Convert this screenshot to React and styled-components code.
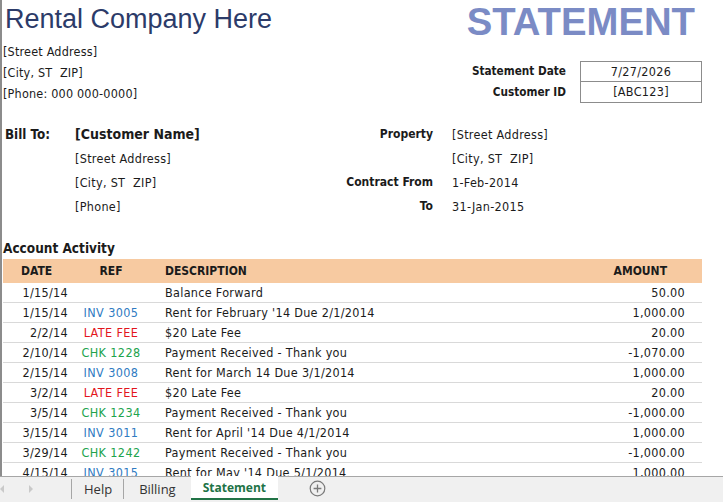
import React from "react";
import styled, { createGlobalStyle } from "styled-components";

const Global = createGlobalStyle`
  html, body { margin: 0; padding: 0; background: #fff; }
  body {
    font-family: "DejaVu Sans Condensed", "Liberation Sans", sans-serif;
    color: #1b1b1b;
  }
`;

const Window = styled.div`
  width: 723px;
  height: 502px;
  display: flex;
  flex-direction: column;
  overflow: hidden;
`;

const Sheet = styled.div`
  flex: 1;
  min-height: 0;
  overflow: hidden;
  position: relative;
  border-left: 2px solid #8c8c8c;
  padding: 0 21px 0 1px;
  &::before {
    content: "";
    position: absolute;
    left: -2px;
    top: 0;
    width: 2px;
    height: 37px;
    background: #1e6b3f;
  }
`;

const TitleRow = styled.div`
  height: 41px;
  display: flex;
  align-items: center;
  justify-content: space-between;
  padding: 0 7px 2px 2px;
  box-sizing: border-box;
`;

const CompanyName = styled.div`
  font-family: "Liberation Sans", Arial, sans-serif;
  font-size: 27px;
  line-height: 1;
  color: #2c3b69;
`;

const DocTitle = styled.div`
  align-self: flex-start;
  font-family: "Liberation Sans", Arial, sans-serif;
  font-weight: bold;
  font-size: 38.3px;
  line-height: 1.15;
  margin-top: 0;
  color: #7b8bc5;
`;

const InfoRow = styled.div`
  display: flex;
  justify-content: space-between;
  align-items: flex-start;
`;

const AddressBlock = styled.div`
  display: flex;
  flex-direction: column;
`;

const Line = styled.div`
  height: 21px;
  line-height: 21px;
  font-size: 12.5px;
  letter-spacing: 0.2px;
  white-space: nowrap;
`;

const MetaGrid = styled.div`
  margin-top: 20px;
  display: grid;
  grid-template-columns: auto 122px;
  grid-auto-rows: 21px;
  column-gap: 14px;
`;

const MetaLabel = styled.div`
  font-size: 11.7px;
  font-weight: bold;
  text-align: right;
  line-height: 21px;
`;

const MetaValue = styled.div`
  box-sizing: border-box;
  border: 1px solid #8c8c8c;
  border-top-width: ${(p) => (p.$first ? 1 : 0)}px;
  font-size: 12.5px;
  letter-spacing: 0.3px;
  text-align: center;
  line-height: ${(p) => (p.$first ? 19 : 20)}px;
`;

const BillGrid = styled.div`
  margin-top: 18px;
  display: grid;
  grid-template-columns: 72px 1fr auto 250px;
  grid-auto-rows: 24px;
  align-items: center;
  font-size: 12.5px;
  letter-spacing: 0.3px;
  white-space: nowrap;
`;

const BillLabel = styled.div`
  font-weight: bold;
  font-size: 13.3px;
  letter-spacing: 0;
  padding-left: 2px;
`;

const CustomerName = styled.div`
  font-weight: bold;
  font-size: 14px;
  letter-spacing: 0;
`;

const FieldLabel = styled.div`
  font-weight: bold;
  font-size: 12px;
  letter-spacing: 0;
  text-align: right;
  padding-right: 19px;
`;

const SectionTitle = styled.div`
  margin-top: 20px;
  height: 21px;
  line-height: 21px;
  font-weight: bold;
  font-size: 13.5px;
`;

const Columns = `
  display: grid;
  grid-template-columns: 72px 72px 1fr 150px;
  align-items: center;
  white-space: nowrap;
`;

const HeadRow = styled.div`
  ${Columns}
  height: 24px;
  background: #f7caa1;
  font-weight: bold;
  font-size: 12px;
`;

const HeadCell = styled.div`
  text-align: ${(p) => p.$align || "left"};
  padding: ${(p) => p.$pad || "0"};
`;

const Row = styled.div`
  ${Columns}
  height: 20px;
  box-sizing: border-box;
  border-bottom: 1px solid #d9d9d9;
  font-size: 12.5px;
  letter-spacing: 0.3px;
`;

const DateCell = styled.div`
  text-align: right;
  padding-right: 7px;
`;

const RefCell = styled.div`
  text-align: center;
  color: ${(p) => p.$color};
  letter-spacing: 0.4px;
`;

const DescCell = styled.div`
  padding-left: 18px;
`;

const AmountCell = styled.div`
  text-align: right;
  padding-right: 17px;
`;

const TabBar = styled.div`
  height: 26px;
  flex-shrink: 0;
  box-sizing: border-box;
  border-top: 1px solid #a6a6a6;
  background: #f0f0f0;
  display: flex;
  align-items: flex-start;
  font-family: "Open Sans", "Noto Sans", sans-serif;
  font-size: 13px;
`;

const NavArea = styled.div`
  width: 72px;
  height: 23px;
  display: flex;
  align-items: center;
  gap: 20px;
  box-sizing: border-box;
`;

const Arrow = styled.span`
  width: 0;
  height: 0;
  border-top: 4px solid transparent;
  border-bottom: 4px solid transparent;
  ${(p) =>
    p.$dir === "left"
      ? "border-right: 4px solid #c9c9c9; margin-left: 0;"
      : "border-left: 4px solid #c9c9c9; margin-left: 5px;"}
`;

const Tab = styled.div`
  height: ${(p) => (p.$active ? 24 : 23)}px;
  margin-top: ${(p) => (p.$active ? -1 : 0)}px;
  box-sizing: border-box;
  padding: 0 ${(p) => p.$pad}px;
  display: flex;
  align-items: center;
  color: ${(p) => (p.$active ? "#217346" : "#333")};
  font-weight: ${(p) => (p.$active ? 700 : 400)};
  font-size: ${(p) => (p.$active ? 12 : 13)}px;
  background: ${(p) => (p.$active ? "#fff" : "transparent")};
  border-bottom: ${(p) => (p.$active ? "2px solid #217346" : "none")};
  position: relative;
  ${(p) =>
    p.$sep
      ? `&::before { content: ""; position: absolute; left: -1px; top: 2px; bottom: 1px; width: 1px; background: #a6a6a6; }`
      : ""}
`;

const AddButton = styled.div`
  margin-left: 31px;
  height: 23px;
  display: flex;
  align-items: center;
`;

const rows = [
  ["1/15/14", "", "", "Balance Forward", "50.00"],
  ["1/15/14", "INV 3005", "inv", "Rent for February '14 Due 2/1/2014", "1,000.00"],
  ["2/2/14", "LATE FEE", "fee", "$20 Late Fee", "20.00"],
  ["2/10/14", "CHK 1228", "chk", "Payment Received - Thank you", "-1,070.00"],
  ["2/15/14", "INV 3008", "inv", "Rent for March 14 Due 3/1/2014", "1,000.00"],
  ["3/2/14", "LATE FEE", "fee", "$20 Late Fee", "20.00"],
  ["3/5/14", "CHK 1234", "chk", "Payment Received - Thank you", "-1,000.00"],
  ["3/15/14", "INV 3011", "inv", "Rent for April '14 Due 4/1/2014", "1,000.00"],
  ["3/29/14", "CHK 1242", "chk", "Payment Received - Thank you", "-1,000.00"],
  ["4/15/14", "INV 3015", "inv", "Rent for May '14 Due 5/1/2014", "1,000.00"],
];

const refColors = { inv: "#2f7bc2", fee: "#e3161c", chk: "#21a34c" };

export default function App() {
  return (
    <>
      <Global />
      <Window>
        <Sheet>
          <TitleRow>
            <CompanyName>Rental Company Here</CompanyName>
            <DocTitle>STATEMENT</DocTitle>
          </TitleRow>

          <InfoRow>
            <AddressBlock>
              <Line>[Street Address]</Line>
              <Line>[City, ST&nbsp; ZIP]</Line>
              <Line>[Phone: 000 000-0000]</Line>
            </AddressBlock>
            <MetaGrid>
              <MetaLabel>Statement Date</MetaLabel>
              <MetaValue $first>7/27/2026</MetaValue>
              <MetaLabel>Customer ID</MetaLabel>
              <MetaValue>[ABC123]</MetaValue>
            </MetaGrid>
          </InfoRow>

          <BillGrid>
            <BillLabel>Bill To:</BillLabel>
            <CustomerName>[Customer Name]</CustomerName>
            <FieldLabel>Property</FieldLabel>
            <div>[Street Address]</div>

            <div />
            <div>[Street Address]</div>
            <div />
            <div>[City, ST&nbsp; ZIP]</div>

            <div />
            <div>[City, ST&nbsp; ZIP]</div>
            <FieldLabel>Contract From</FieldLabel>
            <div>1-Feb-2014</div>

            <div />
            <div>[Phone]</div>
            <FieldLabel>To</FieldLabel>
            <div>31-Jan-2015</div>
          </BillGrid>

          <SectionTitle>Account Activity</SectionTitle>

          <HeadRow>
            <HeadCell $pad="0 0 0 18px">DATE</HeadCell>
            <HeadCell $align="center">REF</HeadCell>
            <HeadCell $pad="0 0 0 18px">DESCRIPTION</HeadCell>
            <HeadCell $align="right" $pad="0 35px 0 0">AMOUNT</HeadCell>
          </HeadRow>
          {rows.map(([date, ref, kind, desc, amt], i) => (
            <Row key={i}>
              <DateCell>{date}</DateCell>
              <RefCell $color={refColors[kind]}>{ref}</RefCell>
              <DescCell>{desc}</DescCell>
              <AmountCell>{amt}</AmountCell>
            </Row>
          ))}
        </Sheet>

        <TabBar>
          <NavArea>
            <Arrow $dir="left" />
            <Arrow $dir="right" />
          </NavArea>
          <Tab $sep $pad={12}>Help</Tab>
          <Tab $sep $pad={15}>Billing</Tab>
          <Tab $active $pad={12}>Statement</Tab>
          <AddButton>
            <svg width="17" height="17" viewBox="0 0 17 17">
              <circle cx="8.5" cy="8.5" r="7.3" fill="none" stroke="#7a7a7a" strokeWidth="1.2" />
              <path d="M8.5 4.6v7.8M4.6 8.5h7.8" stroke="#7a7a7a" strokeWidth="1.3" />
            </svg>
          </AddButton>
        </TabBar>
      </Window>
    </>
  );
}
